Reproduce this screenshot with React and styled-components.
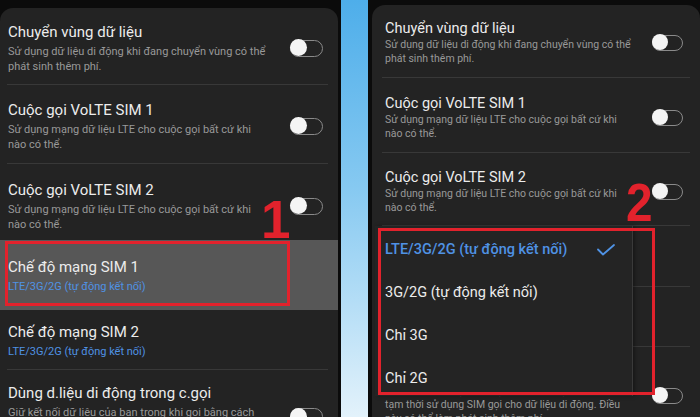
import React from 'react';
import styled, { createGlobalStyle, ThemeProvider } from 'styled-components';

const GlobalStyle = createGlobalStyle`
  html, body { margin: 0; padding: 0; }
  body {
    width: 700px;
    height: 417px;
    overflow: hidden;
    background: linear-gradient(180deg, #4eaeea 0%, #86c9f1 45%, #e3f2fb 100%);
    font-family: Roboto, "Noto Sans", sans-serif;
    -webkit-font-smoothing: antialiased;
  }
`;

const leftTheme = {
  title: 15, titleLh: 20, sub: 11, subLh: 15, subMt: 2,
  padL: 8, padR: 15, divL: 7, divR: 10, togW: 33, togH: 17,
};
const rightTheme = {
  title: 14.5, titleLh: 19, sub: 10.5, subLh: 14, subMt: 0,
  padL: 13, padR: 17, divL: 10, divR: 10, togW: 31, togH: 16,
};

const Page = styled.div`
  display: flex;
  height: 417px;
  gap: 27px;
`;

const Phone = styled.div`
  background: #0b0b0b;
  height: 100%;
  box-sizing: border-box;
  padding-top: ${p => p.$top}px;
  padding-left: ${p => p.$left}px;
  padding-right: ${p => p.$right}px;
  width: ${p => p.$width}px;
  flex-shrink: 0;
  overflow: hidden;
`;

const Card = styled.div`
  position: relative;
  background: #232323;
  height: 100%;
  width: ${p => p.$width}px;
  border-radius: 13px 13px 0 0;
  overflow: hidden;
`;

const Row = styled.div`
  display: flex;
  align-items: center;
  padding: ${p => p.$pt}px ${p => p.theme.padR}px ${p => p.$pb}px ${p => p.theme.padL}px;
  background: ${p => (p.$hl ? '#575757' : 'transparent')};
`;

const TextBlock = styled.div`
  flex: 1;
  min-width: 0;
`;

const Title = styled.div`
  font-size: ${p => p.theme.title}px;
  line-height: ${p => p.theme.titleLh}px;
  color: #ececec;
  white-space: nowrap;
`;

const Sub = styled.div`
  margin-top: ${p => p.theme.subMt}px;
  font-size: ${p => p.theme.sub}px;
  line-height: ${p => p.theme.subLh}px;
  color: ${p => (p.$blue ? '#4f92e4' : '#999999')};
  white-space: nowrap;
`;

const Toggle = styled.div`
  position: relative;
  flex-shrink: 0;
  width: ${p => p.theme.togW}px;
  height: ${p => p.theme.togH}px;
  box-sizing: border-box;
  border: 1.5px solid #8a8a8a;
  border-radius: 10px;
  &::before {
    content: '';
    position: absolute;
    left: -1.5px;
    top: -1.5px;
    width: ${p => p.theme.togH}px;
    height: ${p => p.theme.togH}px;
    border-radius: 50%;
    background: #f4f4f4;
  }
`;

const Divider = styled.div`
  height: 1px;
  background: #383838;
  margin: 0 ${p => p.theme.divR}px 0 ${p => p.theme.divL}px;
`;

const RedBox = styled.div`
  position: absolute;
  left: ${p => p.$x}px;
  top: ${p => p.$y}px;
  width: ${p => p.$w}px;
  height: ${p => p.$h}px;
  box-sizing: border-box;
  border: 3px solid #e2222c;
  pointer-events: none;
`;

const Digit = styled.div`
  position: absolute;
  left: ${p => p.$x}px;
  top: ${p => p.$y}px;
  font-family: "Liberation Sans", Arial, sans-serif;
  font-weight: 700;
  font-size: 53px;
  line-height: 53px;
  color: #e2222c;
  transform: scaleX(${p => p.$sx});
  transform-origin: left top;
`;

const Popup = styled.div`
  position: absolute;
  left: 3px;
  top: 221px;
  width: 257px;
  height: 170px;
  background: #242424;
  border-right: 1px solid #3a3a3a;
  box-shadow: 2px 0 4px rgba(0, 0, 0, 0.35);
  overflow: hidden;
`;

const MenuItem = styled.div`
  display: flex;
  align-items: center;
  height: 43px;
  box-sizing: border-box;
  padding: 14px 17px 9px 10px;
  font-size: 14.5px;
  line-height: 20px;
  font-weight: ${p => (p.$active ? 500 : 400)};
  color: ${p => (p.$active ? '#4f92e4' : '#ececec')};
  white-space: nowrap;
`;

const MenuLabel = styled.span`
  flex: 1;
`;

const Check = () => (
  <svg width="18" height="12" viewBox="0 0 18 12" fill="none">
    <polyline points="1,5.5 6,10.5 17,1" stroke="#4f92e4" strokeWidth="1.8" strokeLinecap="round" strokeLinejoin="round" />
  </svg>
);

const subVo = ['Sử dụng mạng dữ liệu LTE cho cuộc gọi bất cứ khi', 'nào có thể.'];
const subRoam = ['Sử dụng dữ liệu di động khi đang chuyển vùng có thể', 'phát sinh thêm phí.'];
const subData = [
  'Giữ kết nối dữ liệu của bạn trong khi gọi bằng cách',
  'tạm thời sử dụng SIM gọi cho dữ liệu di động. Điều',
  'này có thể làm phát sinh thêm phí.',
];
const net = ['LTE/3G/2G (tự động kết nối)'];

const leftRows = [
  { title: 'Chuyển vùng dữ liệu', sub: subRoam, toggle: true, pt: 14, pb: 10, div: true },
  { title: 'Cuộc gọi VoLTE SIM 1', sub: subVo, toggle: true, pt: 15, pb: 11, div: true },
  { title: 'Cuộc gọi VoLTE SIM 2', sub: subVo, toggle: true, pt: 16, pb: 8 },
  { title: 'Chế độ mạng SIM 1', sub: net, blue: true, hl: true, pt: 17, pb: 16 },
  { title: 'Chế độ mạng SIM 2', sub: net, blue: true, pt: 12, pb: 10, div: true },
  { title: 'Dùng d.liệu di động trong c.gọi', sub: subData, toggle: true, pt: 13, pb: 10 },
];

const rightRows = [
  { title: 'Chuyển vùng dữ liệu', sub: subRoam, toggle: true, pt: 14, pb: 11, div: true },
  { title: 'Cuộc gọi VoLTE SIM 1', sub: subVo, toggle: true, pt: 16, pb: 11, div: true },
  { title: 'Cuộc gọi VoLTE SIM 2', sub: subVo, toggle: true, pt: 15, pb: 10, div: true },
  { title: 'Chế độ mạng SIM 1', sub: net, blue: true, pt: 13, pb: 14, div: true },
  { title: 'Chế độ mạng SIM 2', sub: net, blue: true, pt: 13, pb: 13, div: true },
  { title: 'Dùng d.liệu di động trong c.gọi', sub: subData, toggle: true, pt: 18, pb: 10 },
];

const menu = ['LTE/3G/2G (tự động kết nối)', '3G/2G (tự động kết nối)', 'Chỉ 3G', 'Chỉ 2G'];

const SettingsList = ({ rows }) => (
  <>
    {rows.map((r, i) => (
      <React.Fragment key={i}>
        <Row $pt={r.pt} $pb={r.pb} $hl={r.hl}>
          <TextBlock>
            <Title>{r.title}</Title>
            <Sub $blue={r.blue}>
              {r.sub.map((line, j) => (
                <React.Fragment key={j}>
                  {j > 0 && <br />}
                  {line}
                </React.Fragment>
              ))}
            </Sub>
          </TextBlock>
          {r.toggle && <Toggle />}
        </Row>
        {r.div && <Divider />}
      </React.Fragment>
    ))}
  </>
);

export default function App() {
  return (
    <>
      <GlobalStyle />
      <Page>
        <ThemeProvider theme={leftTheme}>
          <Phone $top={8} $left={0} $right={3} $width={341}>
            <Card $width={338}>
              <SettingsList rows={leftRows} />
              <RedBox $x={5} $y={233} $w={285} $h={65} />
              <Digit $x={261} $y={185} $sx={1}>1</Digit>
            </Card>
          </Phone>
        </ThemeProvider>
        <ThemeProvider theme={rightTheme}>
          <Phone $top={5} $left={4} $right={0} $width={332}>
            <Card $width={328}>
              <SettingsList rows={rightRows} />
              <Popup>
                {menu.map((m, i) => (
                  <MenuItem key={m} $active={i === 0}>
                    <MenuLabel>{m}</MenuLabel>
                    {i === 0 && <Check />}
                  </MenuItem>
                ))}
              </Popup>
              <RedBox $x={6} $y={223} $w={277} $h={167} />
              <Digit $x={254} $y={171} $sx={0.9}>2</Digit>
            </Card>
          </Phone>
        </ThemeProvider>
      </Page>
    </>
  );
}
